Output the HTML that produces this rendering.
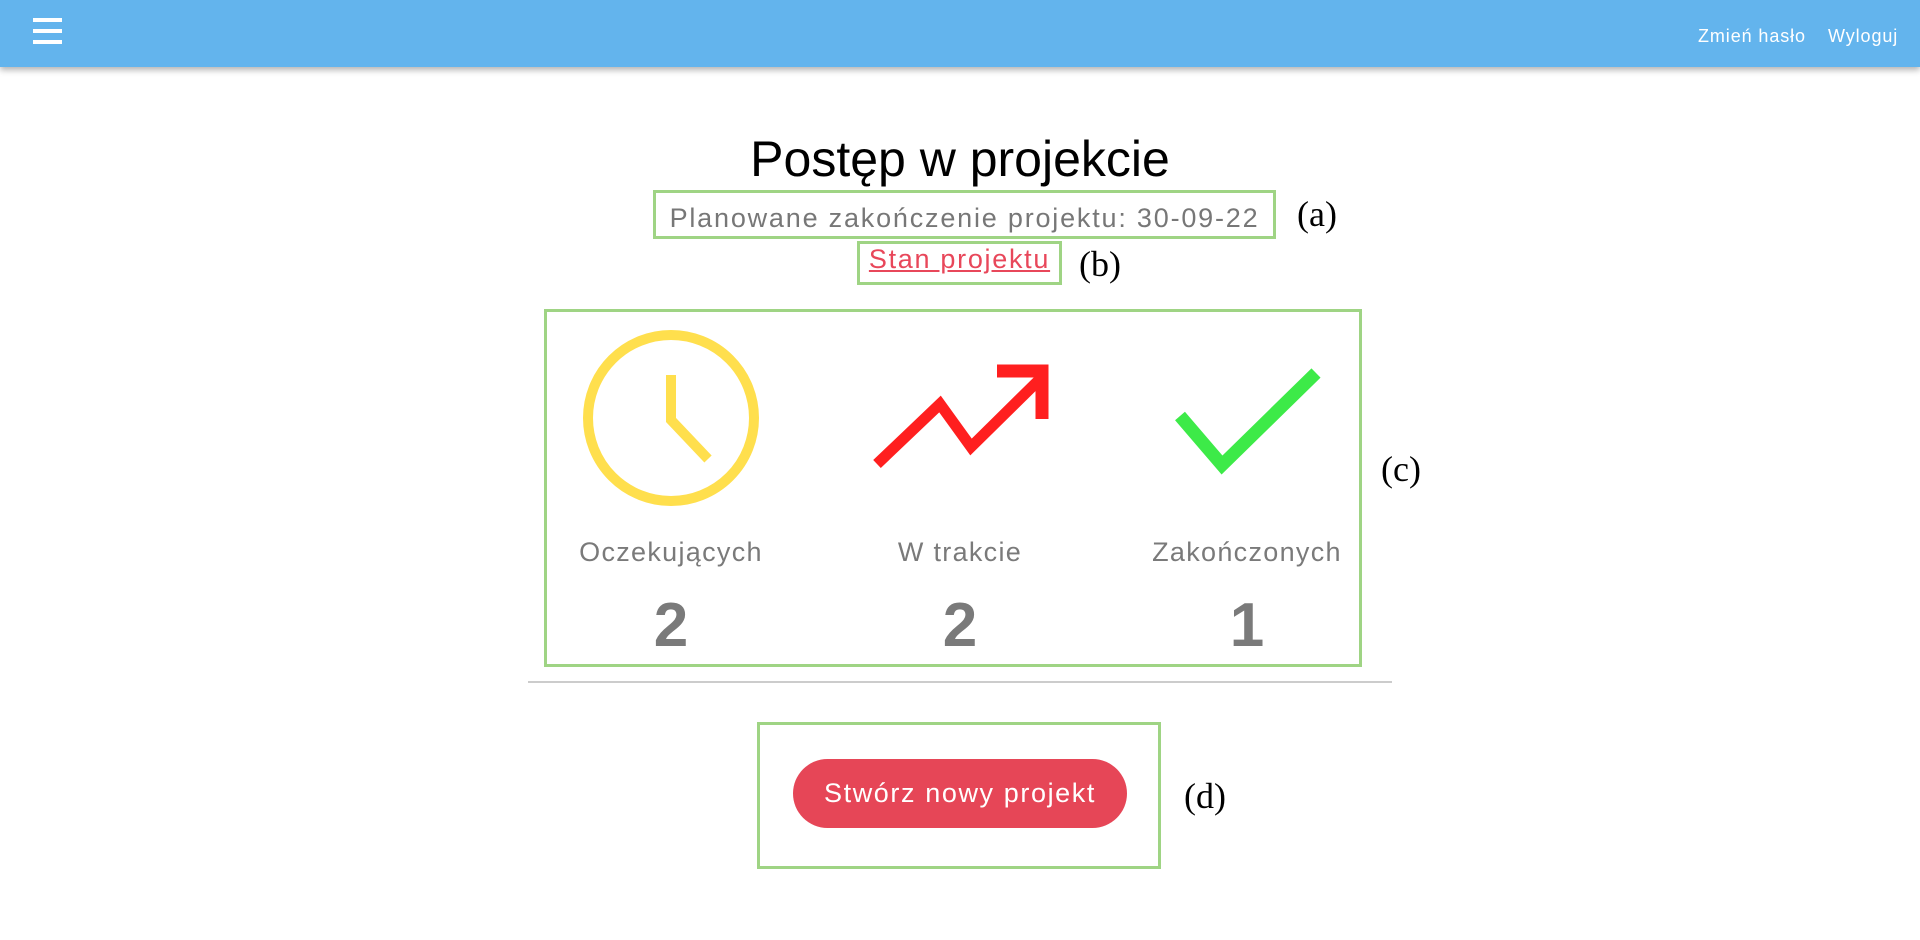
<!DOCTYPE html>
<html><head><meta charset="utf-8"><style>
*{margin:0;padding:0;box-sizing:border-box}
body{width:1920px;height:940px;background:#fff;position:relative;overflow:hidden;font-family:"Liberation Sans",sans-serif}
.nav{position:absolute;left:0;top:0;width:1920px;height:67px;background:#63b4ed;box-shadow:0 3px 6px rgba(0,0,0,.3)}
.hb{position:absolute;left:33px;width:29px;height:4px;background:#fff}
.nl{position:absolute;top:26px;color:#fff;font-size:18px;letter-spacing:0.9px}
.t{position:absolute;white-space:nowrap}
.box{position:absolute;border:3px solid #9fd484}
.lt{position:absolute;font-family:"Liberation Serif",serif;font-size:36px;color:#000}
.lab{position:absolute;width:300px;text-align:center;color:#7a7a7a;font-size:27px;letter-spacing:1.3px}
.num{position:absolute;width:300px;text-align:center;color:#7a7a7a;font-size:62px;font-weight:bold}
</style></head><body>
<div class="nav">
<div class="hb" style="top:18px"></div><div class="hb" style="top:29px"></div><div class="hb" style="top:40px"></div>
<div class="nl" style="left:1698px">Zmień hasło</div>
<div class="nl" style="left:1828px">Wyloguj</div>
</div>
<div class="t" style="left:0;width:1920px;text-align:center;top:130px;font-size:50px;color:#000">Postęp w projekcie</div>
<div class="box" style="left:653px;top:190px;width:623px;height:49px"></div>
<div class="t" style="left:653px;width:623px;text-align:center;top:203px;font-size:27px;color:#777;letter-spacing:1.8px">Planowane zakończenie projektu: 30-09-22</div>
<div class="lt" style="left:1297px;top:193px">(a)</div>
<div class="box" style="left:857px;top:241px;width:205px;height:44px"></div>
<div class="t" style="left:857px;width:205px;text-align:center;top:244px;font-size:27px;color:#e8475a;text-decoration:underline;letter-spacing:1.7px">Stan projektu</div>
<div class="lt" style="left:1079px;top:243px">(b)</div>
<div class="box" style="left:544px;top:309px;width:818px;height:358px"></div>
<svg style="position:absolute;left:0;top:0" width="1920" height="940">
<circle cx="671" cy="418" r="83" fill="none" stroke="#ffdf4d" stroke-width="10"/>
<polyline points="671,375 671,420 708,459" fill="none" stroke="#ffdf4d" stroke-width="10"/>
<polyline points="877,464 940,404 971,447 1041,378" fill="none" stroke="#ff1f1f" stroke-width="11"/>
<polyline points="997,371 1042,371 1042,419" fill="none" stroke="#ff1f1f" stroke-width="13"/>
<polyline points="1180,416 1222,465 1316,373" fill="none" stroke="#3dea48" stroke-width="13"/>
<line x1="528" y1="682" x2="1392" y2="682" stroke="#cccccc" stroke-width="2"/>
</svg>
<div class="lab" style="left:521px;top:537px">Oczekujących</div>
<div class="lab" style="left:810px;top:537px">W trakcie</div>
<div class="lab" style="left:1097px;top:537px">Zakończonych</div>
<div class="num" style="left:521px;top:590px">2</div>
<div class="num" style="left:810px;top:590px">2</div>
<div class="num" style="left:1097px;top:590px">1</div>
<div class="lt" style="left:1381px;top:448px">(c)</div>
<div class="box" style="left:757px;top:722px;width:404px;height:147px"></div>
<div style="position:absolute;left:793px;top:759px;width:334px;height:69px;border-radius:35px;background:#e64657;color:#fff;font-size:27px;text-align:center;line-height:69px;letter-spacing:1.6px">Stwórz nowy projekt</div>
<div class="lt" style="left:1184px;top:775px">(d)</div>
</body></html>
